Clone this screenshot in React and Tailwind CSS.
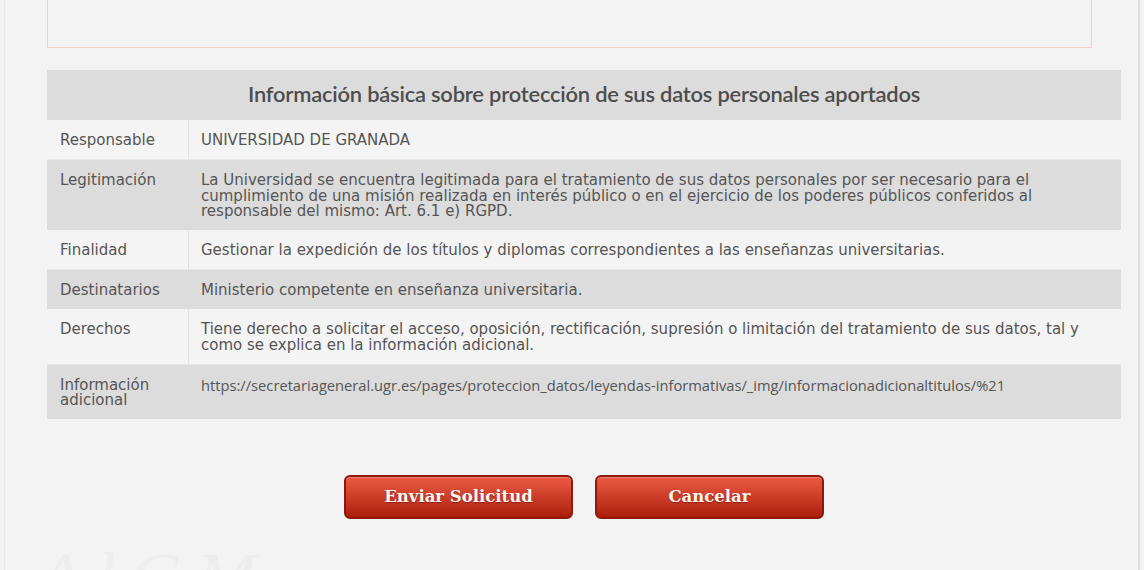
const rows = [
  { label: "Responsable", value: "UNIVERSIDAD DE GRANADA" },
  {
    label: "Legitimación",
    value:
      "La Universidad se encuentra legitimada para el tratamiento de sus datos personales por ser necesario para el cumplimiento de una misión realizada en interés público o en el ejercicio de los poderes públicos conferidos al responsable del mismo: Art. 6.1 e) RGPD.",
  },
  {
    label: "Finalidad",
    value: "Gestionar la expedición de los títulos y diplomas correspondientes a las enseñanzas universitarias.",
  },
  { label: "Destinatarios", value: "Ministerio competente en enseñanza universitaria." },
  {
    label: "Derechos",
    value:
      "Tiene derecho a solicitar el acceso, oposición, rectificación, supresión o limitación del tratamiento de sus datos, tal y como se explica en la información adicional.",
  },
  {
    label: "Información adicional",
    value:
      "https://secretariageneral.ugr.es/pages/proteccion_datos/leyendas-informativas/_img/informacionadicionaltitulos/%21",
    url: true,
  },
];

function RedButton({ children }) {
  return (
    <button
      type="button"
      className="h-[44px] w-[229px] rounded-[6px] border-2 border-[#8e1a0d] bg-gradient-to-b from-[#ec5a43] to-[#ad1c08] text-[16.5px] font-bold text-[#fff8f2] [font-family:'DejaVu_Serif',serif] [text-shadow:0_1px_1px_rgba(90,0,0,0.5)] shadow-[inset_0_1px_0_rgba(255,255,255,0.25)]"
    >
      {children}
    </button>
  );
}

export default function App() {
  return (
    <div className="relative h-[570px] overflow-hidden bg-[#f3f3f3] [font-family:'DejaVu_Sans',Verdana,sans-serif]">
      <div
        aria-hidden="true"
        className="pointer-events-none absolute left-[38px] top-[542px] select-none text-[72px] italic leading-none tracking-[14px] text-[#ededed] [font-family:'Liberation_Serif',serif]"
      >
        AlGM
      </div>

      <div className="relative ml-[4px] h-full w-[1136px] border-l border-r-2 border-l-[#e9e9e9] border-r-[#dcdcdc] pl-[42px]">
        <div className="h-[48px] w-[1045px] border-x border-b border-[#f2d0c4]" />

        <div className="mt-[22px] w-[1074px] text-[#555]">
          <div className="flex h-[50px] items-center justify-center bg-[#dcdcdc] pb-[2px] text-[21.9px] font-semibold tracking-[-0.2px] text-[#4d4d4d] [font-family:Lato,sans-serif]">
            Información básica sobre protección de sus datos personales aportados
          </div>
          {rows.map((r, i) => {
            const dark = i % 2 === 1;
            return (
              <div
                key={r.label}
                className={`flex text-[15px] leading-[15.5px] ${
                  dark ? "bg-[#dcdcdc]" : "border-b border-[#e8e8e8] bg-[#f4f4f4]"
                }`}
              >
                <div
                  className={`w-[142px] shrink-0 border-r pb-[10.5px] pl-[13px] pr-2 pt-[13px] ${
                    dark ? "border-[#dcdcdc]" : "border-[#e2e2e2]"
                  }`}
                >
                  {r.label}
                </div>
                <div
                  className={`flex-1 pb-[10.5px] pl-[12px] pr-3 pt-[13px] ${
                    r.url ? "text-[14.7px] [font-family:'Open_Sans',sans-serif]" : ""
                  }`}
                >
                  {r.value}
                </div>
              </div>
            );
          })}

          <div className="mt-[56px] flex justify-center gap-[22px]">
            <RedButton>Enviar Solicitud</RedButton>
            <RedButton>Cancelar</RedButton>
          </div>
        </div>
      </div>
    </div>
  );
}
